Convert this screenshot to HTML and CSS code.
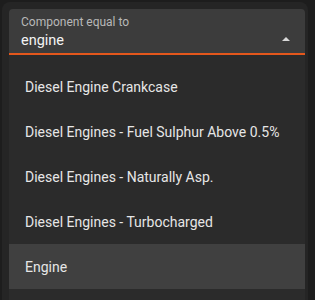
FILE: index.html
```html
<!DOCTYPE html>
<html>
<head>
<meta charset="utf-8">
<link rel="stylesheet" href="styles.css">
</head>
<body>
<div class="panel">
  <div class="field">
    <div class="texts">
      <div class="label">Component equal to</div>
      <div class="value">engine</div>
    </div>
    <svg class="caret" width="8" height="4" viewBox="0 0 8 4"><path d="M0 4 L4 0 L8 4 Z" fill="#d8d8d8"/></svg>
  </div>
  <ul class="menu">
    <li class="item">Diesel Engine Crankcase</li>
    <li class="item">Diesel Engines - Fuel Sulphur Above 0.5%</li>
    <li class="item">Diesel Engines - Naturally Asp.</li>
    <li class="item">Diesel Engines - Turbocharged</li>
    <li class="item active">Engine</li>
  </ul>
</div>
</body>
</html>
```
FILE: styles.css
```css
html, body {
  margin: 0;
  padding: 0;
  height: 100%;
  overflow: hidden;
}
body {
  background: #1d1d1d;
  font-family: Roboto, "Liberation Sans", sans-serif;
}
.panel {
  margin: 2px 7px 0 2px;
  height: 298px;
  box-sizing: border-box;
  background: #252525;
  border-radius: 8px 8px 0 0;
  padding: 7px 3px 0 7px;
  display: flex;
  flex-direction: column;
}
.field {
  height: 46px;
  box-sizing: border-box;
  background: #3c3c3c;
  border-radius: 4px 4px 0 0;
  border-bottom: 2px solid #e4571c;
  display: flex;
  align-items: flex-start;
  padding: 6px 15px 0 12px;
}
.texts {
  flex: 1;
  display: flex;
  flex-direction: column;
}
.label {
  font-size: 12px;
  line-height: 14px;
  color: #b8b8b8;
}
.value {
  font-size: 14.5px;
  line-height: 18px;
  color: #f4f4f4;
  margin-top: 3px;
}
.caret {
  display: block;
  margin-top: 22px;
}
.menu {
  list-style: none;
  margin: 0;
  padding: 9px 0 0 0;
  background: #2b2b2b;
  flex: 1;
}
.item {
  height: 45px;
  display: flex;
  align-items: center;
  padding-left: 16px;
  font-size: 14px;
  color: #e6e6e6;
}
.item.active {
  background: #404040;
}
```
